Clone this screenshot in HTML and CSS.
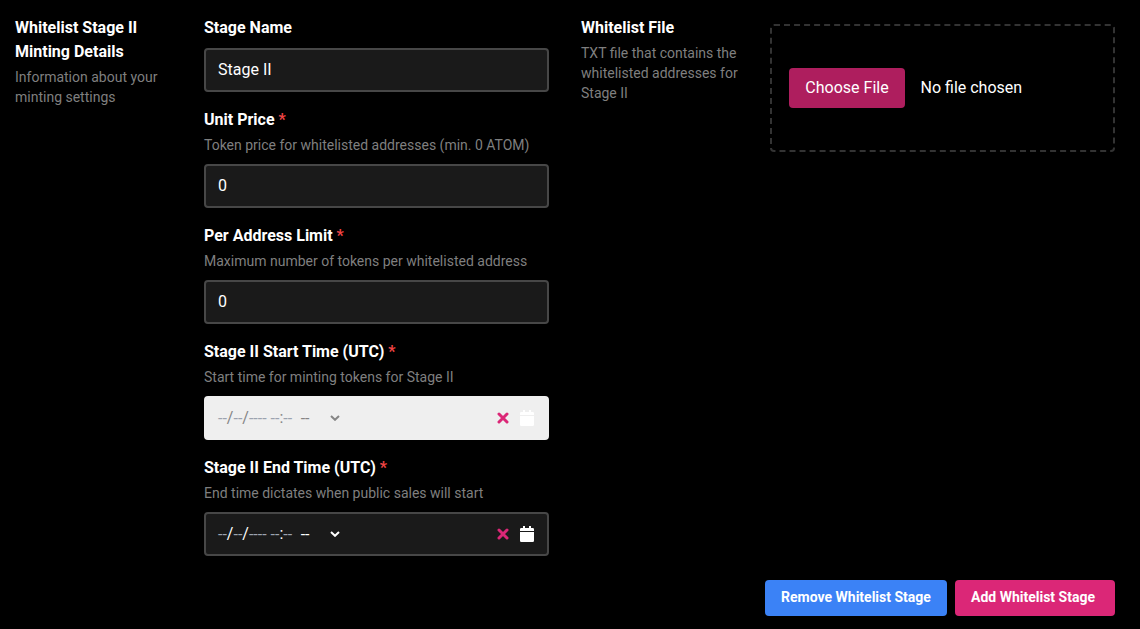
FILE: index.html
```html
<!DOCTYPE html>
<html lang="en">
<head>
<meta charset="utf-8">
<title>Whitelist Stage</title>
<link rel="stylesheet" href="styles.css">
</head>
<body>
<main class="page">
  <div class="groups">
    <section class="group">
      <header class="intro">
        <h2 class="label">Whitelist Stage II Minting Details</h2>
        <p class="hint">Information about your minting settings</p>
      </header>
      <div class="fields">
        <div class="field">
          <label class="label" for="name">Stage Name</label>
          <input class="box" id="name" type="text" value="Stage II">
        </div>
        <div class="field">
          <div><label class="label" for="price">Unit Price <span class="required">*</span></label>
          <p class="hint">Token price for whitelisted addresses (min. 0 ATOM)</p></div>
          <input class="box" id="price" type="text" value="0">
        </div>
        <div class="field">
          <div><label class="label" for="limit">Per Address Limit <span class="required">*</span></label>
          <p class="hint">Maximum number of tokens per whitelisted address</p></div>
          <input class="box" id="limit" type="text" value="0">
        </div>
        <div class="field">
          <div><div class="label">Stage II Start Time (UTC) <span class="required">*</span></div>
          <p class="hint">Start time for minting tokens for Stage II</p></div>
          <div class="box picker disabled">
            <div class="date"><i>--</i>/<i>--</i>/<i>----</i><i class="hour">--</i>:<i>--</i></div>
            <span class="period">--</span>
            <svg class="chevron" viewBox="0 0 10 6"><path d="M1 1l4 3.8L9 1"/></svg>
            <svg class="clear" viewBox="0 0 12 12"><path d="M2 2l8 8M10 2l-8 8"/></svg>
            <svg class="calendar" viewBox="0 0 14 16"><path d="M0 4V3.2Q0 2 1.2 2H3V0h2v2h4V0h2v2h1.8Q14 2 14 3.2V5H0zM0 6h14v8.7q0 1.3-1.3 1.3H1.3Q0 16 0 14.7z"/></svg>
          </div>
        </div>
        <div class="field">
          <div><div class="label">Stage II End Time (UTC) <span class="required">*</span></div>
          <p class="hint">End time dictates when public sales will start</p></div>
          <div class="box picker">
            <div class="date"><i>--</i>/<i>--</i>/<i>----</i><i class="hour">--</i>:<i>--</i></div>
            <span class="period">--</span>
            <svg class="chevron" viewBox="0 0 10 6"><path d="M1 1l4 3.8L9 1"/></svg>
            <svg class="clear" viewBox="0 0 12 12"><path d="M2 2l8 8M10 2l-8 8"/></svg>
            <svg class="calendar" viewBox="0 0 14 16"><path d="M0 4V3.2Q0 2 1.2 2H3V0h2v2h4V0h2v2h1.8Q14 2 14 3.2V5H0zM0 6h14v8.7q0 1.3-1.3 1.3H1.3Q0 16 0 14.7z"/></svg>
          </div>
        </div>
      </div>
    </section>
    <section class="group">
      <header class="intro">
        <h2 class="label">Whitelist File</h2>
        <p class="hint">TXT file that contains the whitelisted addresses for Stage II</p>
      </header>
      <div class="dropzone">
        <button class="choose">Choose File</button>
        <span>No file chosen</span>
      </div>
    </section>
  </div>
  <footer class="actions">
    <button class="action remove">Remove Whitelist Stage</button>
    <button class="action add">Add Whitelist Stage</button>
  </footer>
</main>
</body>
</html>
```
FILE: styles.css
```css
* { box-sizing: border-box; }
body {
  margin: 0;
  background: #000;
  color: #fff;
  font: 16px/24px Roboto, sans-serif;
}
h2, p { margin: 0; }
button, input { font: inherit; color: inherit; border: 0; }
.page { padding: 16px 25px 0 15px; }
.groups { display: flex; justify-content: space-between; height: 540px; }
.group { display: grid; grid-template-columns: 157px 345px; column-gap: 32px; align-items: start; }
.label { display: block; font-size: 16px; font-weight: 700; line-height: 24px; }
.hint { margin-top: 3px; padding-bottom: 1px; font-size: 14px; line-height: 20px; color: #7f7f7f; }
.required { color: #ef4444; }
.fields { display: flex; flex-direction: column; gap: 16px; }
.field { display: flex; flex-direction: column; gap: 8px; }
.box {
  width: 100%;
  height: 44px;
  padding: 0 12px 2px;
  background: #1a1a1a;
  border: 2px solid #474747;
  border-radius: 4px;
}
.picker { display: flex; align-items: center; padding-bottom: 0; }
.date { display: flex; height: 24px; white-space: pre; }
.date i { margin-top: 1px; font-style: normal; color: #9ca3af; }
.date .hour { margin-left: 4px; }
.period { height: 24px; margin-left: 8.5px; padding-top: 1px; }
.chevron { width: 10px; height: 6px; margin-left: 20.5px; fill: none; stroke: currentColor; stroke-width: 2; }
.clear { width: 12px; height: 12px; margin-left: auto; fill: none; stroke: #db2777; stroke-width: 3; stroke-linecap: round; }
.calendar { width: 14px; height: 16px; margin-left: 11px; margin-right: 1px; fill: #fff; }
.disabled { background: #efefef; border-color: #efefef; color: #858585; }
.dropzone {
  display: flex;
  align-items: center;
  gap: 15.5px;
  height: 128px;
  margin-top: 8px;
  padding: 0 17px;
  border: 2px dashed #333;
  border-radius: 4px;
}
.choose { height: 40px; width: 116px; padding: 0; background: #ae1e5e; border-radius: 4px; }
.actions { display: flex; justify-content: flex-end; gap: 8px; margin-top: 24px; }
.action { height: 36px; padding: 0 16px 2px; border-radius: 4px; font-size: 14px; font-weight: 700; line-height: 20px; }
.remove { width: 182px; background: #3b82f6; }
.add { width: 160px; padding-right: 20px; background: #db2777; }
```
